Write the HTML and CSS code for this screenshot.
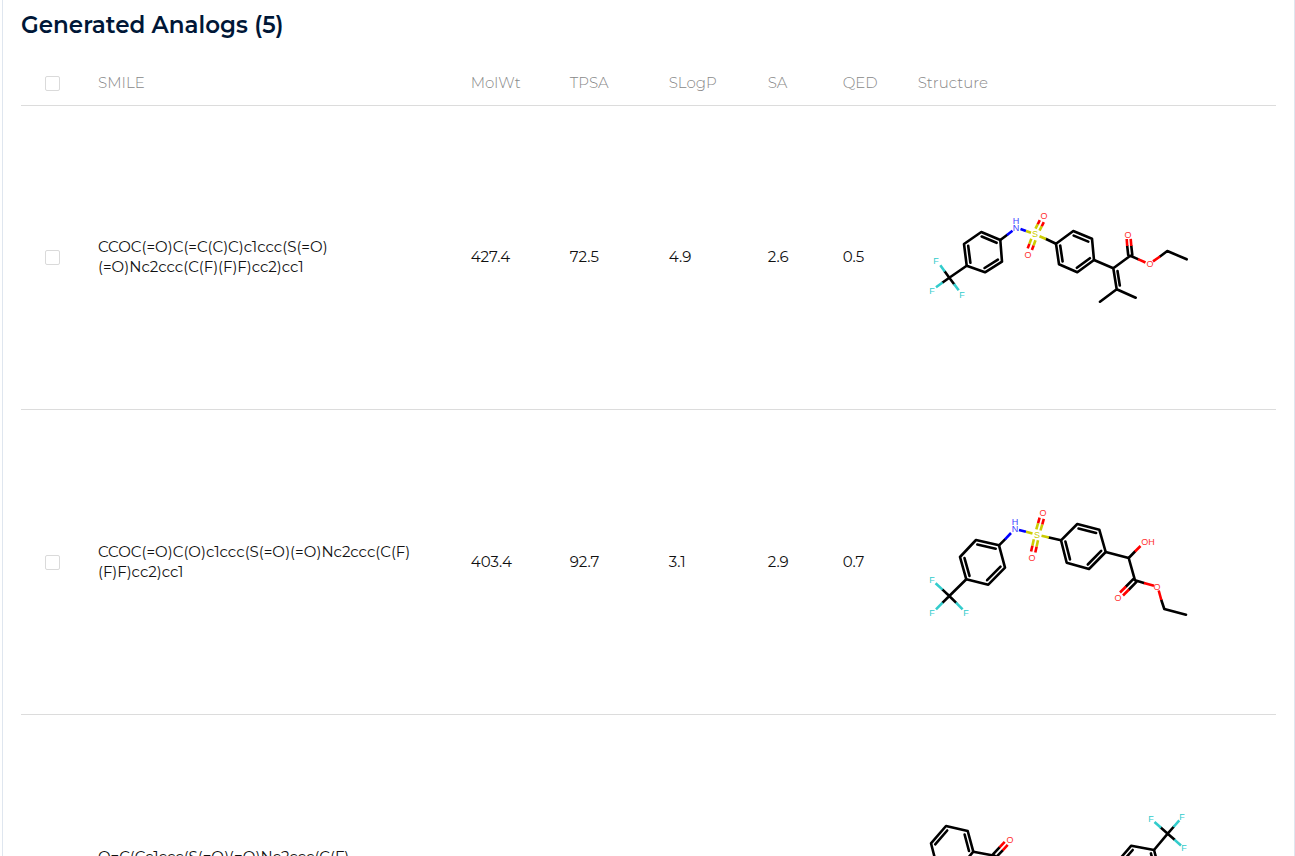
FILE: index.html
```html
<!DOCTYPE html>
<html lang="en">

<head>
    <meta charset="UTF-8">
    <meta name="viewport" content="width=device-width, initial-scale=1.0">
    <title>Generated Analogs</title>
    <link rel="stylesheet" href="styles.css">
</head>

<body>
    <div class="panel">
        <h2>Generated Analogs (5)</h2>
        <table class="analogs">
            <colgroup>
                <col class="col-check">
                <col class="col-smile">
                <col class="col-wide">
                <col class="col-wide">
                <col class="col-wide">
                <col class="col-narrow">
                <col class="col-narrow">
                <col>
            </colgroup>
            <thead>
                <tr>
                    <th class="check"><input type="checkbox" aria-label="Select all analogs"></th>
                    <th>SMILE</th>
                    <th>MolWt</th>
                    <th>TPSA</th>
                    <th>SLogP</th>
                    <th>SA</th>
                    <th>QED</th>
                    <th>Structure</th>
                </tr>
            </thead>
            <tbody>
                <tr>
                    <td class="check"><input type="checkbox" aria-label="Select analog 1"></td>
                    <td>CCOC(=O)C(=C(C)C)c1ccc(S(=O)<wbr>(=O)Nc2ccc(C(F)(F)F)cc2)cc1</td>
                    <td>427.4</td>
                    <td>72.5</td>
                    <td>4.9</td>
                    <td>2.6</td>
                    <td>0.5</td>
                    <td>
                        <svg class="molecule" viewBox="0 0 280 280" role="img" aria-label="Structure of analog 1">
                            <!-- rings and carbon chain -->
                            <path class="c" d="M48.7 148.7L46 127L63.3 115L82.3 123L84 144.7L67 155.3Z M52.4 145.8L50.2 128.9 M63.7 119.5L78.6 125.8 M79.9 142.7L66.6 151" />
                            <path class="c" d="M138 126.7L155.3 114L174 121.7L176 143L159.3 155.3L141 147.3Z M144.6 144.5L142.2 128.5 M155.7 118.6L170.3 124.6 M171.9 141.2L158.9 150.8" />
                            <path class="c" d="M48.7 148.7L31.3 160.7L26.8 154.5 M31.3 160.7L24.6 165.5 M31.3 160.7L36 167 M82.3 123L89 118 M128 122L138 126.7" />
                            <path class="c" d="M176 143L195.3 151.3L212.3 138.7L220 142.1 M195.3 151.3L198.7 172.3L182 184.7 M198.7 172.3L217.7 180.7 M199.5 154L201.8 168.5 M210.2 138L209.2 129 M214.3 138L213.3 129 M242 139.5L249.3 134L268.7 142.3" />
                            <path class="f" d="M26.8 154.5L22.3 148.3 M24.6 165.5L18 170.3 M36 167L40.7 173.3" />
                            <path class="n" d="M89 118L94.5 113.8 M102.5 112L108 114" />
                            <path class="s" d="M108 114L113 115.7 M121.5 119.2L128 122 M117.5 111.7L119.8 107.2 M121.5 113.7L123.8 109.2 M113.3 121.7L111.4 126.9 M117.5 123.3L115.6 128.5" />
                            <path class="o" d="M119.8 107.2L121.8 103.1 M123.8 109.2L125.8 105.1 M111.4 126.9L109.7 131.4 M115.6 128.5L113.9 133 M209.2 129L208.7 122 M213.3 129L212.7 121.8 M220 142.1L227.5 145.5 M235 144.4L242 139.5" />
                            <text class="f" x="18" y="147">F</text>
                            <text class="f" x="14" y="177">F</text>
                            <text class="f" x="44" y="181">F</text>
                            <text class="n" x="98" y="107">H</text>
                            <text class="n" x="98" y="114">N</text>
                            <text class="s" x="117" y="120">S</text>
                            <text class="o" x="126" y="102">O</text>
                            <text class="o" x="110" y="141">O</text>
                            <text class="o" x="210" y="121">O</text>
                            <text class="o" x="232" y="150">O</text>
                        </svg>
                    </td>
                </tr>
                <tr>
                    <td class="check"><input type="checkbox" aria-label="Select analog 2"></td>
                    <td>CCOC(=O)C(O)c1ccc(S(=O)(=O)Nc2ccc(C(F)<wbr>(F)F)cc2)cc1</td>
                    <td>403.4</td>
                    <td>92.7</td>
                    <td>3.1</td>
                    <td>2.9</td>
                    <td>0.7</td>
                    <td>
                        <svg class="molecule" viewBox="0 0 280 280" role="img" aria-label="Structure of analog 2">
                            <path class="c" d="M48.3 157.3L42 135L58 118L81 123.3L87 145.7L70.3 162.7Z M51.5 153.9L46.5 136.1 M59.3 122.5L77.7 126.7 M82.5 144.6L69.1 158.2" />
                            <path class="c" d="M143 118.3L159.3 102L181.3 107.7L187.7 130L171 147L148.7 140.7Z M147.4 119.5L152 137.4 M160.5 106.5L178.1 111 M183.2 128.9L169.8 142.5" />
                            <path class="c" d="M48.3 157.3L31.3 174L24.5 167.6 M31.3 174L24.6 180.7 M31.3 174L38 180.7 M81 123.3L87 117.3 M131 115.5L143 118.3" />
                            <path class="c" d="M187.7 130L210.7 136L217 158.3L226 160.9 M210.7 136L217 129.5 M215.5 156.8L208 164.5 M218.5 159.8L211 167.5 M243.3 178L246.3 187L268 192.7" />
                            <path class="f" d="M24.5 167.6L17.6 161.2 M24.6 180.7L18 187.3 M38 180.7L44.6 187.3" />
                            <path class="n" d="M87 117.3L93 111 M101 108L108 109.8" />
                            <path class="s" d="M108 109.8L114.5 111.5 M123.5 113.7L131 115.5 M118.3 107.3L120.1 101.1 M122.5 108.5L124.3 102.3 M115.8 117.3L114.4 123.7 M120 118.3L118.6 124.7" />
                            <path class="o" d="M120.1 101.1L121.6 95.6 M124.3 102.3L125.8 96.8 M114.4 123.7L113.1 129.5 M118.6 124.7L117.3 130.5 M217 129.5L222.5 124 M208 164.5L202 170.5 M211 167.5L205 173.5 M226 160.9L236 163.8 M240.7 168.5L243.3 178" />
                            <text class="f" x="14" y="161">F</text>
                            <text class="f" x="14" y="194">F</text>
                            <text class="f" x="48" y="194">F</text>
                            <text class="n" x="97" y="103">H</text>
                            <text class="n" x="97" y="110">N</text>
                            <text class="s" x="119" y="116">S</text>
                            <text class="o" x="125" y="94">O</text>
                            <text class="o" x="114" y="139">O</text>
                            <text class="o" x="230" y="123">OH</text>
                            <text class="o" x="200" y="179">O</text>
                            <text class="o" x="239" y="168">O</text>
                        </svg>
                    </td>
                </tr>
                <tr>
                    <td class="check"><input type="checkbox" aria-label="Select analog 3"></td>
                    <td>O=C(Cc1ccc(S(=O)(=O)Nc2ccc(C(F)<wbr>(F)F)cc2)cc1)c1ccccc1</td>
                    <td>419.4</td>
                    <td>63.2</td>
                    <td>4.9</td>
                    <td>1.9</td>
                    <td>0.6</td>
                    <td>
                        <svg class="molecule" viewBox="0 0 280 280" role="img" aria-label="Structure of analog 3">
                            <path class="c" d="M13 116.3L28 99L49.7 104L55.3 124.7L40 143L18.6 138Z M17.2 117.3L29.2 103.5 M46.6 107.5L51 124 M38.8 138.7L21.7 134.7" />
                            <path class="c" d="M104 156L120 140L141 146L147 167L131 183L110 177Z M108 157L121 144 M138 150L143 166 M129 179L112 174" />
                            <path class="c" d="M236 123L213.3 118.7L200 134L205 157L227 161L242 145Z M214.7 123L204.1 135.2 M208.1 153.6L225.7 156.8 M237.7 144L232.9 126.4" />
                            <path class="c" d="M55.3 124.7L76.7 128.7L83 150L104 156 M75.2 127.2L81.5 120.3 M78.2 130.2L84.7 123.3 M147 167L157 170 M196 161L205 157 M236 123L249.7 106.7L243 100.8 M249.7 106.7L255.5 100 M249.7 106.7L256.4 112.6" />
                            <path class="f" d="M243 100.8L236.5 95 M255.5 100L261.3 93.3 M256.4 112.6L263 118.5" />
                            <path class="n" d="M192 163L196 161 M180 168L184 166" />
                            <path class="s" d="M157 170L163 172 M172 171L180 168 M167 167L169 162 M171 168L173 163 M165 178L164 182 M169 179L168 183" />
                            <path class="o" d="M81.5 120.3L86.7 114.8 M84.7 123.3L89.7 117.8 M169 162L171 157 M173 163L175 158 M164 182L163 187 M168 183L167 188" />
                            <text class="f" x="233" y="95">F</text>
                            <text class="f" x="264" y="93">F</text>
                            <text class="f" x="266" y="124">F</text>
                            <text class="n" x="188" y="167">N</text>
                            <text class="n" x="188" y="174">H</text>
                            <text class="s" x="168" y="176">S</text>
                            <text class="o" x="92" y="116">O</text>
                            <text class="o" x="174" y="155">O</text>
                            <text class="o" x="164" y="195">O</text>
                        </svg>
                    </td>
                </tr>
            </tbody>
        </table>
    </div>
</body>

</html>
```
FILE: styles.css
```css
body {
    font-family: 'Montserrat', 'Inter', sans-serif;
    font-size: 15px;
    line-height: 20px;
    margin: 0;
    color: #111111;
    background-color: #ffffff;
}

.panel {
    margin-left: 2px;
    padding: 10px 18px;
    border: 1px solid #dfe6ef;
    border-top: none;
}

h2 {
    margin: 0 0 21px;
    font-size: 23px;
    line-height: 30px;
    font-weight: 600;
    color: #001737;
}

.analogs {
    width: 100%;
    table-layout: fixed;
    border-collapse: separate;
    border-spacing: 0;
}

.col-check {
    width: 65px;
}

.col-smile {
    width: 29.7%;
}

.col-wide {
    width: 99px;
}

.col-narrow {
    width: 75px;
}

th,
td {
    padding: 12px;
    text-align: left;
    vertical-align: middle;
    border-bottom: 1px solid #dcdcdc;
}

th {
    font-weight: 300;
    color: #888888;
}

tbody tr:first-child td {
    padding-top: 11px;
}

th.check,
td.check {
    padding-left: 24px;
    padding-right: 0;
}

input[type="checkbox"] {
    appearance: none;
    display: block;
    width: 15px;
    height: 15px;
    margin: 0;
    border: 1px solid #dadada;
    border-radius: 2px;
    background-color: #ffffff;
}

input[type="checkbox"]:checked {
    background-color: #001737;
}

/* Molecule drawings, coloured by element */
.molecule {
    display: block;
    width: 280px;
    height: 280px;
}

.molecule path {
    fill: none;
    stroke-width: 2.6;
    stroke-linejoin: round;
}

.molecule text {
    font-family: 'Liberation Sans', sans-serif;
    font-size: 9px;
    text-anchor: middle;
}

path.c {
    stroke: #000000;
    stroke-linecap: round;
}

path.f {
    stroke: #33cccc;
}

path.n {
    stroke: #0000ff;
}

path.o {
    stroke: #ff0000;
}

path.s {
    stroke: #cccc00;
}

text.f {
    fill: #33cccc;
}

text.n {
    fill: #4040ff;
}

text.o {
    fill: #ff3030;
}

text.s {
    fill: #cccc00;
}
```
